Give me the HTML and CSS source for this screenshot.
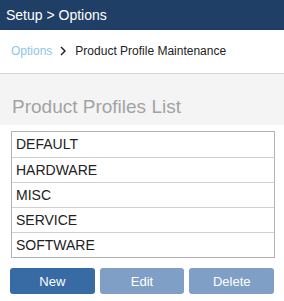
FILE: index.html
```html
<!DOCTYPE html>
<html lang="en">
<head>
    <meta charset="UTF-8">
    <title>Product Profile Maintenance</title>
    <link rel="stylesheet" href="styles.css">
</head>
<body>
    <div class="topbar">Setup &gt; Options</div>

    <div class="crumbs">
        <a class="crumb-link" href="#">Options</a>
        <svg class="crumb-sep" width="6" height="10" viewBox="0 0 6 10">
            <path d="M1 1 L5 5 L1 9" fill="none" stroke="#222" stroke-width="1.5"/>
        </svg>
        <span class="crumb-current">Product Profile Maintenance</span>
    </div>

    <div class="panel-title">Product Profiles List</div>

    <div class="content">
        <ul class="profiles">
            <li>DEFAULT</li>
            <li>HARDWARE</li>
            <li>MISC</li>
            <li>SERVICE</li>
            <li>SOFTWARE</li>
        </ul>
        <div class="actions">
            <button class="btn btn-primary">New</button>
            <button class="btn btn-muted">Edit</button>
            <button class="btn btn-muted">Delete</button>
        </div>
    </div>
</body>
</html>
```

FILE: styles.css
```css
* {
    margin: 0;
    padding: 0;
    box-sizing: border-box;
}

body {
    font-family: "Liberation Sans", Arial, sans-serif;
    background: #fff;
    color: #222;
}

.topbar {
    height: 30px;
    background: #203f66;
    color: #fff;
    font-size: 14px;
    line-height: 30px;
    padding-left: 6px;
}

.crumbs {
    height: 44px;
    display: flex;
    align-items: center;
    padding: 0 11px 1px;
    font-size: 12px;
    border-bottom: 1px solid #d4d4d4;
}

.crumb-link {
    color: #8dc5ea;
    text-decoration: none;
}

.crumb-sep {
    margin: 0 9px 0 8px;
}

.crumb-current {
    color: #222;
}

.panel-title {
    height: 51px;
    background: #f4f4f4;
    color: #a3a3a3;
    font-size: 19px;
    padding: 22px 0 0 12px;
    line-height: 22px;
}

.content {
    padding: 6px 10px 0 11px;
}

.profiles {
    list-style: none;
    border: 1px solid #b3b3b3;
    width: 264px;
}

.profiles li {
    height: 25px;
    line-height: 24px;
    font-size: 14px;
    padding-left: 4px;
    border-top: 1px solid #d0d0d0;
}

.profiles li:first-child {
    border-top: none;
}

.actions {
    display: flex;
    gap: 5px;
    margin: 10px 0 0 -1px;
}

.btn {
    width: 85px;
    height: 26px;
    border: none;
    border-radius: 3px;
    color: #fff;
    font-family: "Liberation Sans", Arial, sans-serif;
    font-size: 13px;
    cursor: pointer;
}

.btn-primary {
    background: #386aa4;
}

.btn-muted {
    background: #7f9fc6;
}
```
